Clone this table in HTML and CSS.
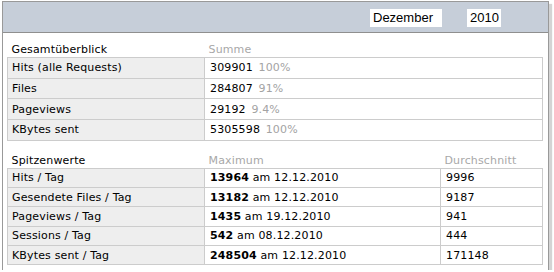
FILE: index.html
```html
<!DOCTYPE html>
<html lang="de">
<head>
<meta charset="utf-8">
<title>Statistik Dezember 2010</title>
<link rel="stylesheet" href="styles.css">
</head>
<body>
<div class="panel">
  <div class="panel-head">
    <span class="sel sel-month">Dezember</span>
    <span class="sel sel-year">2010</span>
  </div>
  <div class="panel-body">
    <table class="stats stats-sum">
      <colgroup><col class="c-label"><col></colgroup>
      <thead>
        <tr><th>Gesamtüberblick</th><th class="muted">Summe</th></tr>
      </thead>
      <tbody>
        <tr><td class="lbl">Hits (alle Requests)</td><td>309901 <span class="pct">100%</span></td></tr>
        <tr><td class="lbl">Files</td><td>284807 <span class="pct">91%</span></td></tr>
        <tr><td class="lbl">Pageviews</td><td>29192 <span class="pct">9.4%</span></td></tr>
        <tr><td class="lbl">KBytes sent</td><td>5305598 <span class="pct">100%</span></td></tr>
      </tbody>
    </table>
    <table class="stats stats-peak">
      <colgroup><col class="c-label"><col class="c-max"><col></colgroup>
      <thead>
        <tr><th>Spitzenwerte</th><th class="muted">Maximum</th><th class="muted">Durchschnitt</th></tr>
      </thead>
      <tbody>
        <tr><td class="lbl">Hits / Tag</td><td><b>13964</b> am 12.12.2010</td><td>9996</td></tr>
        <tr><td class="lbl">Gesendete Files / Tag</td><td><b>13182</b> am 12.12.2010</td><td>9187</td></tr>
        <tr><td class="lbl">Pageviews / Tag</td><td><b>1435</b> am 19.12.2010</td><td>941</td></tr>
        <tr><td class="lbl">Sessions / Tag</td><td><b>542</b> am 08.12.2010</td><td>444</td></tr>
        <tr><td class="lbl">KBytes sent / Tag</td><td><b>248504</b> am 12.12.2010</td><td>171148</td></tr>
      </tbody>
    </table>
  </div>
</div>
</body>
</html>
```

FILE: styles.css
```css
html, body {
  margin: 0;
  padding: 0;
  background: #ffffff;
}

body {
  font-family: "DejaVu Sans", Verdana, sans-serif;
  font-size: 11px;
  letter-spacing: 0.15px;
  color: #000;
}

.panel {
  margin: 1px 0 0 2px;
  width: 545px;
  height: 268px;
  border: 1px solid #999999;
  border-bottom: 0;
  background: #ffffff;
  box-shadow: 3px 3px 1px #d4d4d4;
}

.panel-head {
  height: 29px;
  background: #c6ced9;
  border-bottom: 1px solid #8f8f8f;
  display: flex;
  align-items: center;
  justify-content: flex-end;
  gap: 25px;
  padding-right: 47px;
  padding-top: 1px;
}

.sel {
  background: #ffffff;
  font-family: "Liberation Sans", Arial, sans-serif;
  font-size: 13px;
  letter-spacing: 0;
  height: 18px;
  line-height: 18px;
  padding: 0 4px 0 3px;
}

.sel-month {
  width: 65px;
}

.sel-year {
  width: 27px;
}

.panel-body {
  padding: 7px 4px 0 4px;
}

.stats {
  width: 536px;
  border-collapse: collapse;
  margin-bottom: 10px;
}

.stats th {
  font-weight: normal;
  text-align: left;
  padding: 0 4px 1px 4px;
  height: 16px;
  vertical-align: bottom;
}

.stats .muted {
  color: #a8a8a8;
}

.stats td {
  border: 1px solid #cccccc;
  padding: 0 4px 0 5px;
  white-space: nowrap;
}

.stats-sum td {
  height: 19.7px;
}

.stats-peak td {
  height: 18.3px;
}

.stats td.lbl {
  background: #eeeeee;
  padding-left: 4px;
}

.c-label {
  width: 197px;
}

.c-max {
  width: 236px;
}

.pct {
  color: #a3a3a3;
  margin-left: 2px;
}
```
